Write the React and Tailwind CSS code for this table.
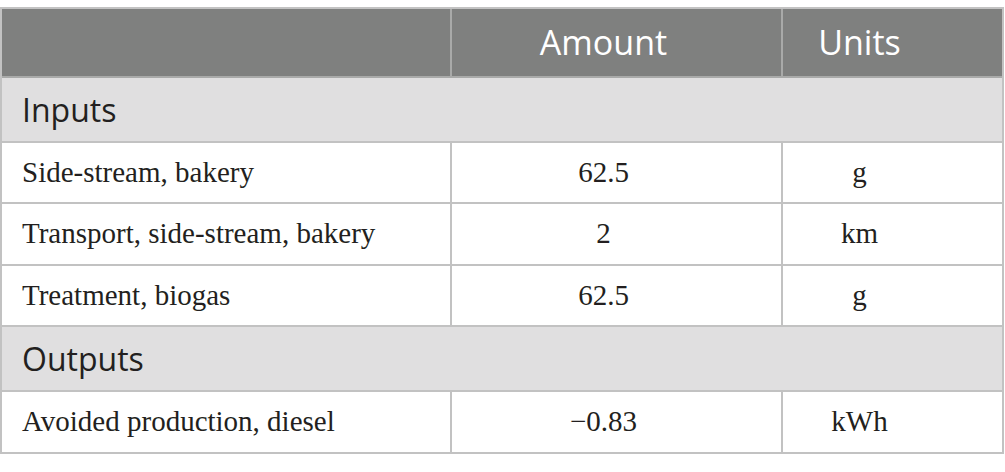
export default function App() {
  const rows1 = [
    ["Side-stream, bakery", "62.5", "g", "h-[61px]"],
    ["Transport, side-stream, bakery", "2", "km", "h-[62px]"],
    ["Treatment, biogas", "62.5", "g", "h-[61px]"],
  ];
  const rows2 = [["Avoided production, diesel", "\u22120.83", "kWh", "h-[62px]"]];
  const cell = "border-[#c2c2c2] border-b-2 flex items-center";
  const DataRow = ({ r }) => (
    <div className={`grid grid-cols-[450px_331px_1fr] ${r[3]} bg-white text-[#231f20] text-[29px] font-['Liberation_Serif',serif]`}>
      <div className={`${cell} border-r-2 pl-[20px]`}>{r[0]}</div>
      <div className={`${cell} border-r-2 justify-center pr-[26px]`}>{r[1]}</div>
      <div className={`${cell} justify-center pr-[66px]`}>{r[2]}</div>
    </div>
  );
  const Section = ({ t }) => (
    <div className="h-[65px] bg-[#e0dfe0] border-b-2 border-[#c2c2c2] flex items-center pl-[20px] text-[32px] text-[#231f20] font-['Open_Sans',sans-serif]">
      {t}
    </div>
  );
  return (
    <div className="w-[1005px] h-[472px] bg-white pt-[7px]">
      <div className="w-[1004px] border-2 border-[#c2c2c2] border-b-0">
        <div className="grid grid-cols-[450px_331px_1fr] h-[69px] bg-[#7f807f] text-white text-[34px] font-['Open_Sans',sans-serif]">
          <div className="border-r-2 border-b-2 border-[#a9aaa9]"></div>
          <div className="border-r-2 border-b-2 border-[#a9aaa9] flex items-center justify-center pr-[26px]">Amount</div>
          <div className="border-b-2 border-[#a9aaa9] flex items-center justify-center pr-[66px]">Units</div>
        </div>
        <Section t="Inputs" />
        {rows1.map((r, i) => <DataRow key={i} r={r} />)}
        <Section t="Outputs" />
        {rows2.map((r, i) => <DataRow key={i} r={r} />)}
      </div>
    </div>
  );
}
